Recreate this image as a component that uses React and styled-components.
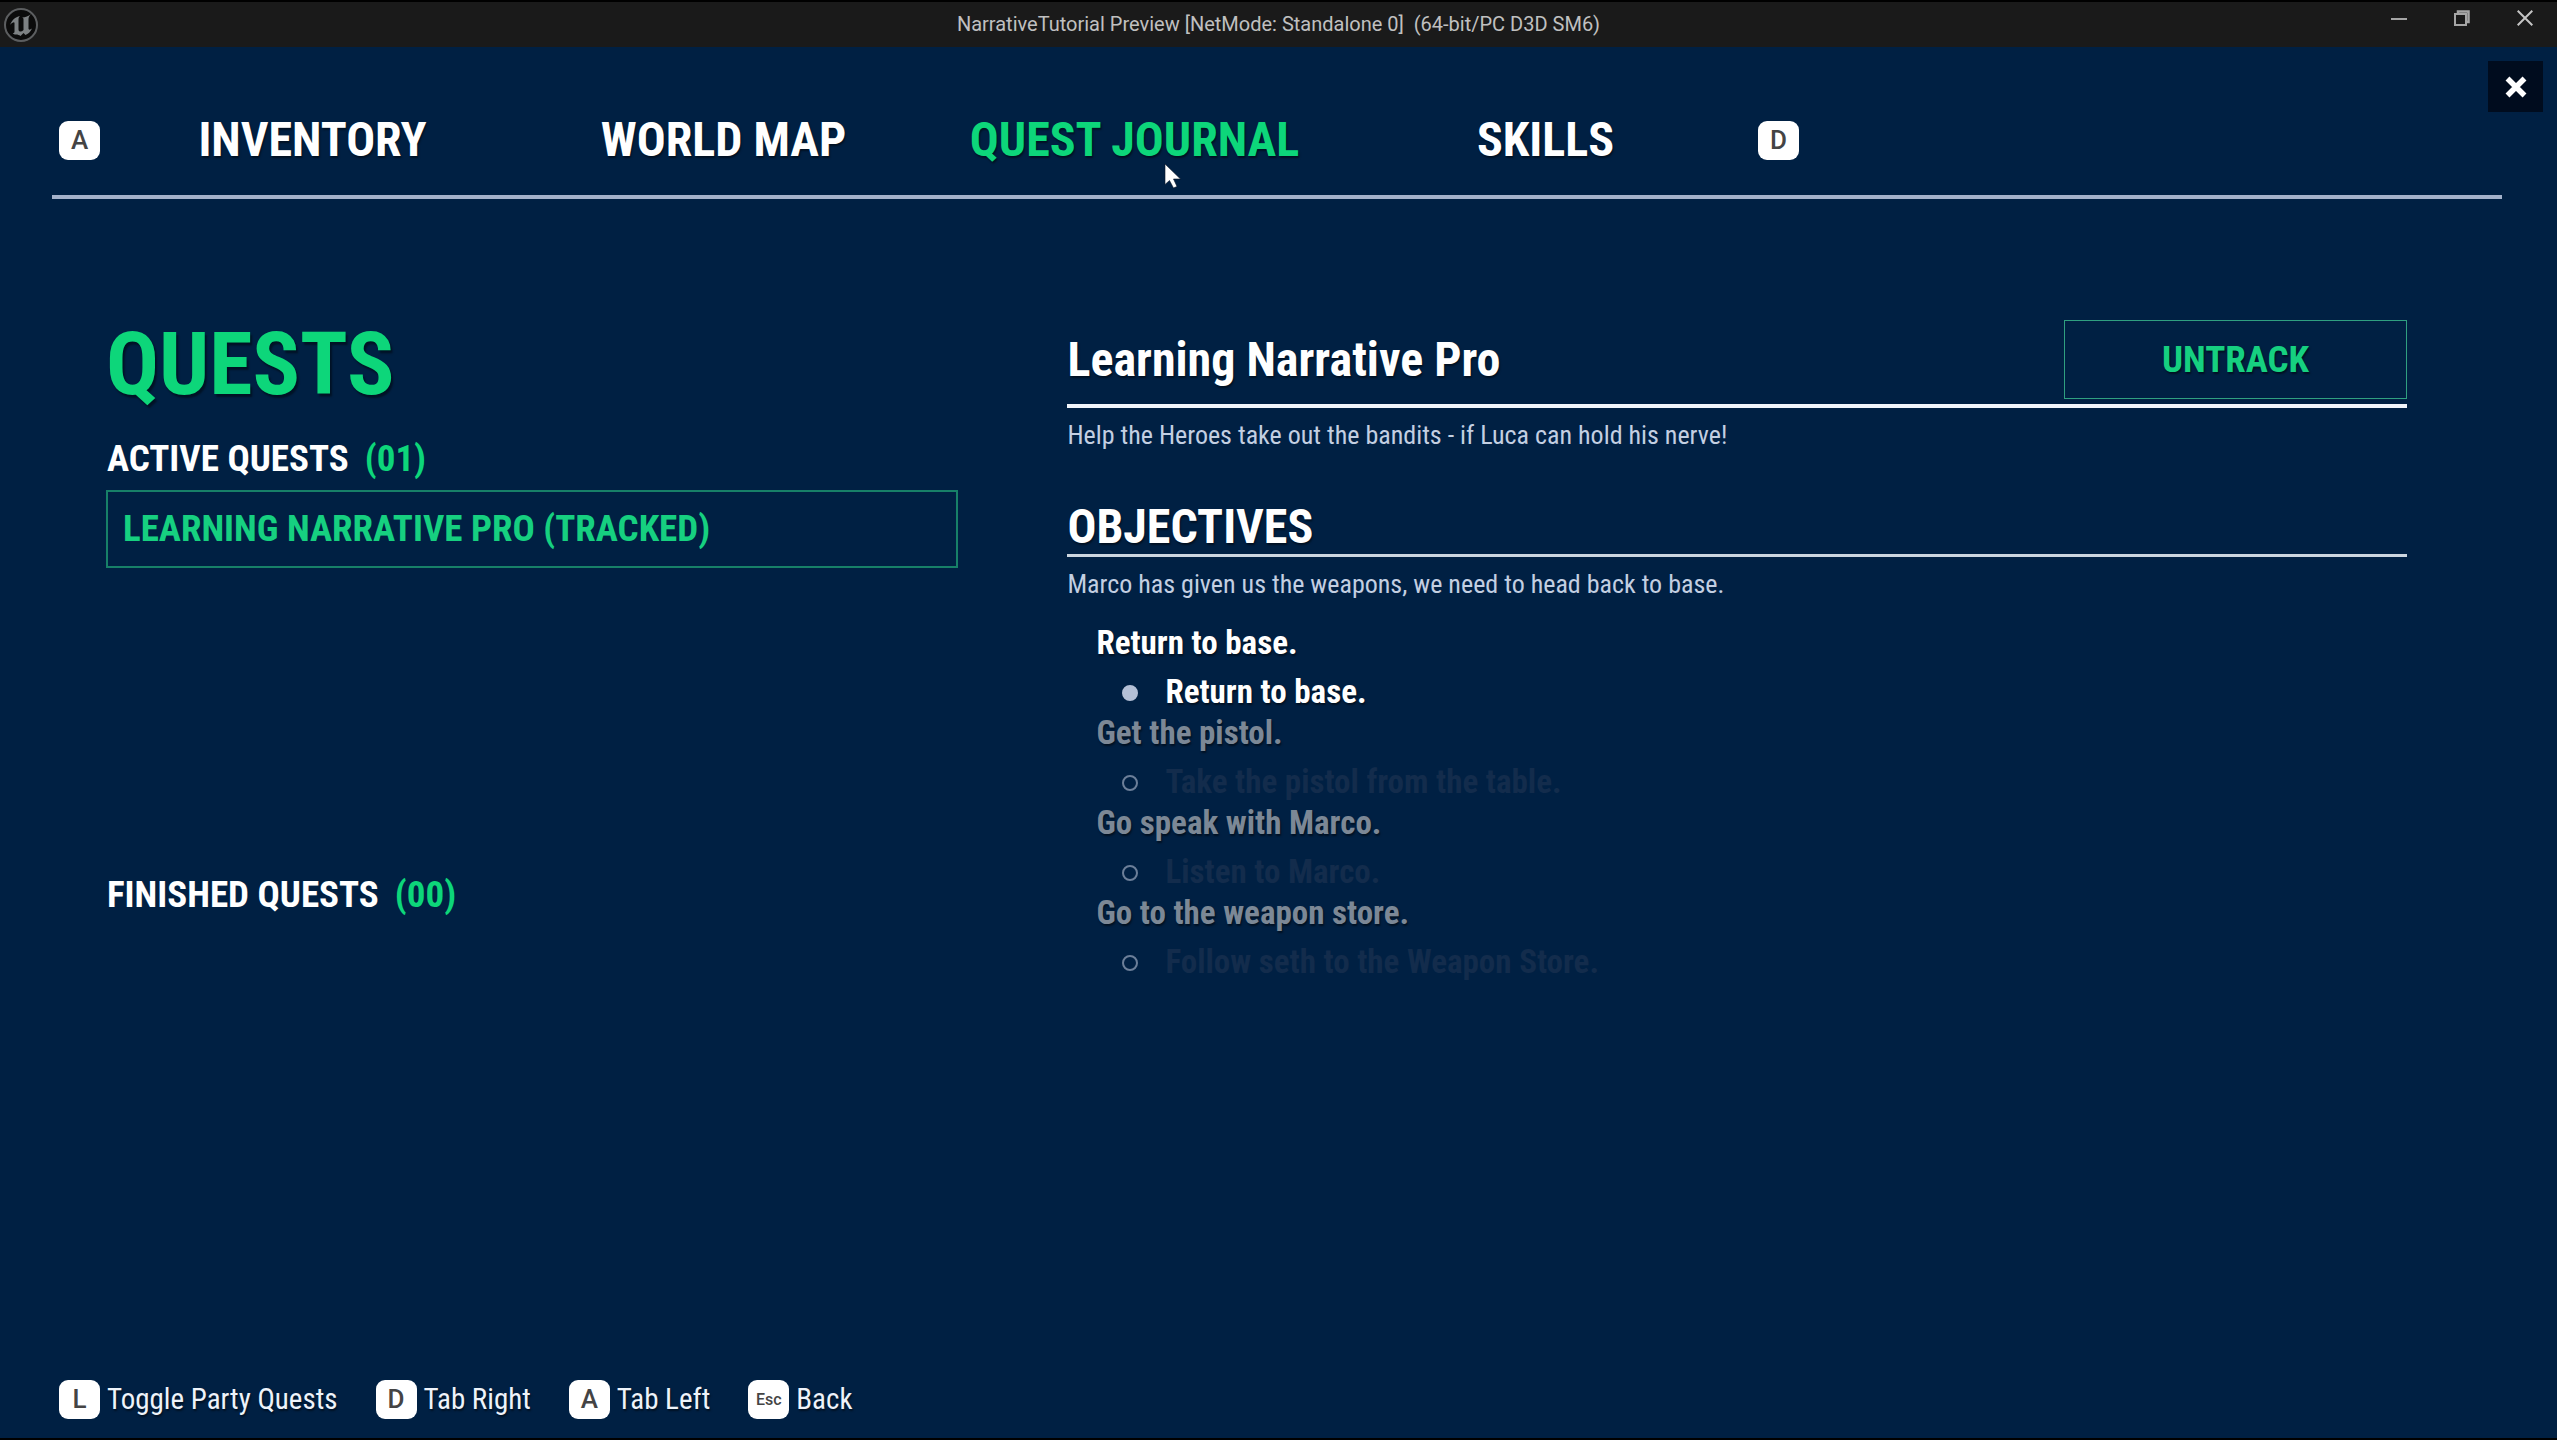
import React from "react";
import styled, { createGlobalStyle } from "styled-components";

const GlobalStyle = createGlobalStyle`
  *, *::before, *::after { box-sizing: border-box; }
  body { margin: 0; background: #000; }
  h1, h2, h3, p, ul { margin: 0; padding: 0; }
  ul { list-style: none; }
  button { font: inherit; color: inherit; background: none; border: 0; padding: 0; margin: 0; cursor: default; }
`;

const green = "#0dd67a";
const navy = "#002043";

const Window = styled.div`
  min-height: 100vh;
  display: flex;
  flex-direction: column;
  border-top: 2px solid #000;
  border-bottom: 2px solid #000;
  background: ${navy};
  color: #fff;
  font-family: "Roboto Condensed", Roboto, "Liberation Sans", sans-serif;
`;

const TitleBar = styled.header`
  display: grid;
  grid-template-columns: 1fr auto 1fr;
  height: 45px;
  background: #1a1a1a;
  color: #c0c0c0;
`;

const LogoSlot = styled.div`
  padding: 5px 0 0 3px;
`;

const WindowTitle = styled.div`
  font: 400 20px/45px Roboto, "Liberation Sans", sans-serif;
  white-space: pre;
`;

const WindowControls = styled.div`
  display: flex;
  justify-content: flex-end;
  gap: 31px;
  padding-right: 16px;
`;

const WindowButton = styled.button`
  width: 32px;
  height: 32px;
  display: grid;
  place-items: center;
`;

const Screen = styled.div`
  position: relative;
  flex: 1;
  display: flex;
  flex-direction: column;
`;

const CloseButton = styled.button`
  position: absolute;
  top: 14px;
  right: 14px;
  width: 55px;
  height: 51px;
  display: grid;
  place-items: center;
  background: #000c1e;
`;

const TabBar = styled.nav`
  display: flex;
  align-items: center;
  gap: 7px;
  margin: 0 55px 0 52px;
  padding: 66px 0 28px 7px;
  border-bottom: 4px solid #a3b1ca;
`;

const Tabs = styled.div`
  display: flex;
`;

const Tab = styled.button`
  position: relative;
  width: 411px;
  font-size: 48px;
  line-height: 54px;
  font-weight: 700;
  color: ${(p) => (p.$active ? green : "#fff")};
  text-shadow: 1px 2px 2px rgba(0, 0, 0, 0.5);
`;

const Pointer = styled.svg`
  position: absolute;
  left: 235px;
  top: 50px;
`;

const Key = styled.kbd`
  flex: none;
  display: grid;
  place-items: center;
  width: 41px;
  height: 39px;
  border-radius: 9px;
  background: #fff;
  color: #444;
  font-family: Roboto, "Liberation Sans", sans-serif;
  font-weight: 500;
  font-size: ${(p) => (p.$small ? 16 : 26)}px;
  line-height: 39px;
  text-shadow: none;
`;

const Main = styled.main`
  display: grid;
  grid-template-columns: 7fr 11fr;
  gap: 109px;
  padding: 116px 150px 0 106px;
`;

const PageTitle = styled.h1`
  font-size: 88px;
  line-height: 97px;
  font-weight: 700;
  color: ${green};
  text-shadow: 2px 3px 2px rgba(0, 0, 0, 0.45);
`;

const GroupTitle = styled.h2`
  display: flex;
  gap: 16px;
  padding-left: 1px;
  font-size: 37px;
  line-height: 44px;
  font-weight: 700;
`;

const Count = styled.span`
  color: ${green};
`;

const QuestGroup = styled.section`
  padding-top: ${(p) => (p.$first ? 25 : 0)}px;
`;

const QuestList = styled.ul`
  min-height: 392px;
  padding-top: 9px;
`;

const QuestButton = styled.button`
  display: block;
  width: 100%;
  height: 78px;
  padding: 0 15px;
  border: 2px solid #178068;
  text-align: left;
  font-size: 37px;
  line-height: 44px;
  font-weight: 700;
  color: #16d080;
`;

const Details = styled.section`
  padding-top: 5px;
`;

const DetailsHead = styled.div`
  display: flex;
  justify-content: space-between;
  align-items: center;
  padding-bottom: 5px;
  border-bottom: 4px solid #f1f5fb;
`;

const Heading = styled.h2`
  font-size: 48px;
  line-height: 54px;
  font-weight: 700;
  text-shadow: 1px 2px 2px rgba(0, 0, 0, 0.5);
`;

const ObjectivesHeading = styled(Heading)`
  margin-top: 49px;
  border-bottom: 3px solid #ccd6e0;
`;

const TrackButton = styled.button`
  width: 343px;
  height: 79px;
  border: 1px solid #2f9f80;
  font-size: 37px;
  line-height: 44px;
  font-weight: 700;
  color: #16d080;
  text-shadow: 1px 2px 2px rgba(0, 0, 0, 0.5);
`;

const Description = styled.p`
  margin-top: 11px;
  font-size: 26px;
  line-height: 32px;
  color: #c3cfe2;
`;

const Objectives = styled.ul`
  padding: 22px 0 0 29px;
`;

const Objective = styled.li`
  color: ${(p) => (p.$done ? "#7c8896" : "#fff")};
  text-shadow: 1px 2px 2px rgba(0, 0, 0, 0.5);
`;

const ObjectiveTitle = styled.h3`
  font-size: 33px;
  line-height: 41px;
  font-weight: 700;
`;

const Task = styled.div`
  display: flex;
  align-items: center;
  gap: 27px;
  padding: 8px 0 0 26px;
  font-size: 33px;
  line-height: 41px;
  font-weight: 700;
  color: ${(p) => (p.$done ? "#132c4c" : "#fff")};
  text-shadow: ${(p) => (p.$done ? "none" : "inherit")};
`;

const Bullet = styled.span`
  width: 16px;
  height: 16px;
  margin-top: 2px;
  border-radius: 50%;
  border: 2px solid ${(p) => (p.$done ? "#6c7f99" : "#b4c0d6")};
  background: ${(p) => (p.$done ? "transparent" : "#b4c0d6")};
`;

const Footer = styled.footer`
  display: flex;
  gap: 38px;
  margin-top: auto;
  padding: 0 59px 19px;
`;

const Hint = styled.button`
  display: flex;
  align-items: center;
  gap: 7px;
  font-size: 29px;
  line-height: 39px;
  color: #eef3fa;
  text-shadow: 1px 2px 2px rgba(0, 0, 0, 0.5);
`;

const tabs = ["INVENTORY", "WORLD MAP", "QUEST JOURNAL", "SKILLS"];

const objectives = [
  { title: "Return to base.", task: "Return to base.", done: false },
  { title: "Get the pistol.", task: "Take the pistol from the table.", done: true },
  { title: "Go speak with Marco.", task: "Listen to Marco.", done: true },
  { title: "Go to the weapon store.", task: "Follow seth to the Weapon Store.", done: true },
];

const hints = [
  { key: "L", label: "Toggle Party Quests" },
  { key: "D", label: "Tab Right" },
  { key: "A", label: "Tab Left" },
  { key: "Esc", label: "Back" },
];

function EngineLogo() {
  return (
    <svg width="36" height="36" viewBox="0 0 36 36" aria-hidden="true" display="block">
      <circle cx="18" cy="18" r="16" fill="#0b0b0b" stroke="#5c5e60" strokeWidth="2" />
      <path
        d="M7 18C9 13 12 10 17 9C15.500 10.500 15.500 11.500 15.500 13V22.500C15.500 24 16.500 24.500 17.500 24.500C18.500 24.500 19.500 24 20.500 23V12.500C20.500 11.200 20 10.800 19 10.500C22.500 10.500 25.500 9 28 7C26 9 25.500 10.500 25.500 12.500V21.500C25.500 23 27 23 29 21.500C27.500 25 25 27 22.500 28L20.500 26L17.500 29C16 28 15 27.500 13 27.500C11.500 27.500 10.500 27 9.800 26C11 26 11.500 25.500 11.500 24.500V16C11.500 14.500 9 15.500 7 18Z"
        fill="#7d8183"
      />
    </svg>
  );
}

export default function App() {
  return (
    <>
      <GlobalStyle />
      <Window>
        <TitleBar>
          <LogoSlot>
            <EngineLogo />
          </LogoSlot>
          <WindowTitle>{"NarrativeTutorial Preview [NetMode: Standalone 0]  (64-bit/PC D3D SM6)"}</WindowTitle>
          <WindowControls>
            <WindowButton aria-label="Minimize">
              <svg width="16" height="16" viewBox="0 0 16 16">
                <path d="M0 9H16" stroke="#a5a5a5" strokeWidth="2" />
              </svg>
            </WindowButton>
            <WindowButton aria-label="Restore">
              <svg width="16" height="16" viewBox="0 0 16 16" fill="none" stroke="#a5a5a5">
                <rect x="1" y="4" width="11" height="11" strokeWidth="2" />
                <path d="M4 3V1.500H14.500V12H13" strokeWidth="2.500" />
              </svg>
            </WindowButton>
            <WindowButton aria-label="Close window">
              <svg width="16" height="16" viewBox="0 0 16 16">
                <path d="M.7 .7 15.300 15.300M15.300 .7 .7 15.300" stroke="#c4c4c4" strokeWidth="2" />
              </svg>
            </WindowButton>
          </WindowControls>
        </TitleBar>
        <Screen>
          <TabBar aria-label="Menu">
            <Key>A</Key>
            <Tabs>
              {tabs.map((name) => {
                const active = name === "QUEST JOURNAL";
                return (
                  <Tab key={name} $active={active} aria-current={active ? "page" : undefined}>
                    {name}
                    {active && (
                      <Pointer width="18" height="26" viewBox="0 0 18 26" aria-hidden="true">
                        <path d="M1 1V21.500L5.500 17.500 9.500 25 13 23.500 9.500 16H16.500Z" fill="#fff" stroke="#0b1526" strokeWidth=".6" />
                      </Pointer>
                    )}
                  </Tab>
                );
              })}
            </Tabs>
            <Key>D</Key>
          </TabBar>
          <CloseButton aria-label="Close">
            <svg width="22" height="22" viewBox="0 0 22 22">
              <path d="M2.500 2.500 19.500 19.500M19.500 2.500 2.500 19.500" stroke="#fff" strokeWidth="5.500" />
            </svg>
          </CloseButton>
          <Main>
            <div>
              <PageTitle>QUESTS</PageTitle>
              <QuestGroup $first>
                <GroupTitle>
                  ACTIVE QUESTS <Count>(01)</Count>
                </GroupTitle>
                <QuestList>
                  <li>
                    <QuestButton>LEARNING NARRATIVE PRO (TRACKED)</QuestButton>
                  </li>
                </QuestList>
              </QuestGroup>
              <QuestGroup>
                <GroupTitle>
                  FINISHED QUESTS <Count>(00)</Count>
                </GroupTitle>
              </QuestGroup>
            </div>
            <Details>
              <DetailsHead>
                <Heading>Learning Narrative Pro</Heading>
                <TrackButton>UNTRACK</TrackButton>
              </DetailsHead>
              <Description>Help the Heroes take out the bandits - if Luca can hold his nerve!</Description>
              <ObjectivesHeading>OBJECTIVES</ObjectivesHeading>
              <Description>Marco has given us the weapons, we need to head back to base.</Description>
              <Objectives>
                {objectives.map((o) => (
                  <Objective key={o.title} $done={o.done}>
                    <ObjectiveTitle>{o.title}</ObjectiveTitle>
                    <Task $done={o.done}>
                      <Bullet $done={o.done} />
                      {o.task}
                    </Task>
                  </Objective>
                ))}
              </Objectives>
            </Details>
          </Main>
          <Footer>
            {hints.map((h) => (
              <Hint key={h.key}>
                <Key $small={h.key.length > 1}>{h.key}</Key>
                {h.label}
              </Hint>
            ))}
          </Footer>
        </Screen>
      </Window>
    </>
  );
}
